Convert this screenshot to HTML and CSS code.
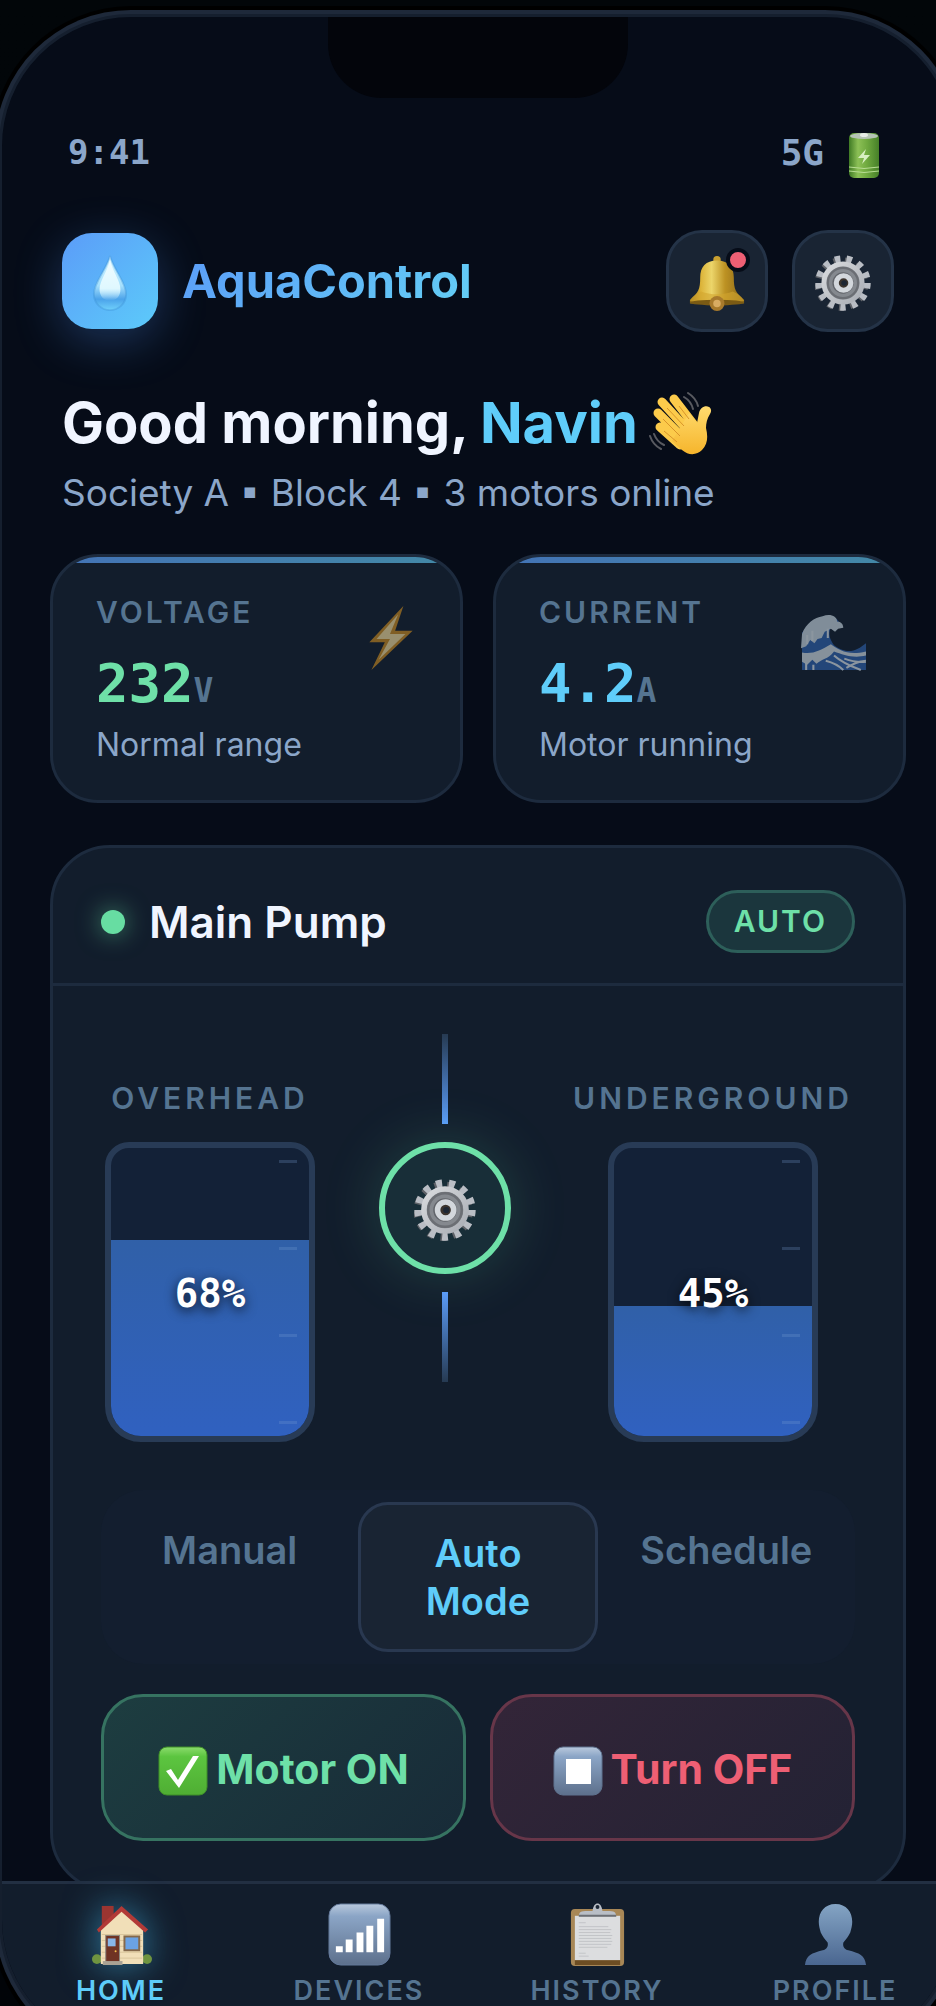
FILE: index.html
```html
<!DOCTYPE html>
<html lang="en">
<head>
    <meta charset="UTF-8">
    <meta name="viewport" content="width=device-width, initial-scale=1.0">
    <title>AquaControl</title>

    <link rel="stylesheet" href="styles.css">
</head>
<body>
    <!-- shared gradients and the gear symbol -->
    <svg class="defs" width="0" height="0" aria-hidden="true">
        <defs>
            <linearGradient id="steel" x1="0" y1="0" x2="0" y2="1">
                <stop offset="0" stop-color="#b9c9dd"/>
                <stop offset="0.2" stop-color="#8ba5c6"/>
                <stop offset="1" stop-color="#5d708c"/>
            </linearGradient>
            <linearGradient id="gold" x1="0" y1="0" x2="1" y2="0">
                <stop offset="0" stop-color="#8e6a14"/>
                <stop offset="0.2" stop-color="#dcb338"/>
                <stop offset="0.4" stop-color="#ecd56a"/>
                <stop offset="0.65" stop-color="#bd9223"/>
                <stop offset="1" stop-color="#8a6717"/>
            </linearGradient>
            <linearGradient id="gear-fill" x1="0" y1="0" x2="1" y2="1">
                <stop offset="0" stop-color="#d9dbde"/>
                <stop offset="1" stop-color="#a9adb4"/>
            </linearGradient>
            <symbol id="gear" viewBox="0 0 100 100">
                <circle cx="47" cy="52" r="42" fill="none" stroke="#5f6268" stroke-width="12" stroke-dasharray="9 11.3"/>
                <circle cx="50" cy="50" r="43" fill="none" stroke="#b9bdc4" stroke-width="13" stroke-dasharray="9.5 11.28"/>
                <circle cx="50" cy="50" r="34" fill="#85898f" stroke="url(#gear-fill)" stroke-width="9"/>
                <circle cx="50" cy="50" r="27" fill="none" stroke="#6b6e74" stroke-width="4"/>
                <circle cx="50" cy="50" r="19" fill="#62656b"/>
                <circle cx="51" cy="50" r="13" fill="#3c342e" stroke="#d3d7dc" stroke-width="9"/>
                <circle cx="52" cy="50" r="5" fill="#1e2734"/>
            </symbol>
        </defs>
    </svg>

    <div class="phone">
        <div class="notch"></div>

        <div class="status-bar">
            <span class="time">9:41</span>
            <span class="signal">5G
                <svg class="battery" viewBox="0 0 48 48" aria-hidden="true">
                    <defs>
                        <linearGradient id="cell" x1="0" y1="0" x2="1" y2="0">
                            <stop offset="0" stop-color="#3f7a24"/>
                            <stop offset="0.3" stop-color="#8cc056"/>
                            <stop offset="0.6" stop-color="#6fa93f"/>
                            <stop offset="1" stop-color="#467f28"/>
                        </linearGradient>
                    </defs>
                    <rect x="9" y="2" width="30" height="45" rx="5" fill="url(#cell)"/>
                    <ellipse cx="24" cy="5" rx="14" ry="3" fill="#b5c4b5"/>
                    <ellipse cx="24" cy="4" rx="4" ry="2" fill="#e6ece6"/>
                    <path d="M26 18l-8 9h6l-2 6 8-9h-6z" fill="#d8efc2"/>
                    <path d="M9 36q15 3 30 0M9 40q15 3 30 0" fill="none" stroke="#b8dd93" stroke-width="1"/>
                </svg>
            </span>
        </div>

        <header class="header">
            <div class="logo">
                <div class="logo-icon">
                    <svg viewBox="0 0 40 60" aria-hidden="true">
                        <defs>
                            <linearGradient id="drop" x1="0" y1="0" x2="0" y2="1">
                                <stop offset="0" stop-color="#d9f6ff"/>
                                <stop offset="0.55" stop-color="#a5e0fd"/>
                                <stop offset="0.8" stop-color="#4ba3ea"/>
                                <stop offset="1" stop-color="#6fd0fb"/>
                            </linearGradient>
                            <linearGradient id="drop-shine" x1="0" y1="0" x2="0" y2="1">
                                <stop offset="0" stop-color="#f0fcff"/>
                                <stop offset="0.7" stop-color="#dff8ff"/>
                                <stop offset="1" stop-color="#dff8ff" stop-opacity="0"/>
                            </linearGradient>
                        </defs>
                        <path d="M20 1C17 14 3 29 3 41c0 10 8 17 17 17s17-7 17-17C37 29 23 14 20 1z" fill="url(#drop)" stroke="#3f93d8" stroke-opacity="0.4" stroke-width="2"/>
                        <path d="M20 5c-2 11-11 22-11 31 0 7 4 12 11 12s11-5 11-12C31 27 22 16 20 5z" fill="url(#drop-shine)"/>
                    </svg>
                </div>
                <span class="logo-text">AquaControl</span>
            </div>
            <div class="header-actions">
                <button class="icon-btn" type="button" aria-label="Notifications">
                    <svg viewBox="0 0 60 60" aria-hidden="true">
                        <circle cx="30" cy="5" r="4" fill="#c9a030"/>
                        <path d="M30 6c-12 0-18 7-18 18 0 13-2 16-11 24v4h58v-4c-9-8-11-11-11-24C48 13 42 6 30 6z" fill="url(#gold)"/>
                        <path d="M1 49c3-6 8-8 12-10 10 4 24 4 34 0 4 2 9 4 12 10-14 6-44 6-58 0z" fill="#d2a52e" opacity="0.6"/>
                        <ellipse cx="30" cy="51" rx="29" ry="3" fill="#7a5a14"/>
                        <circle cx="30" cy="52" r="8" fill="#a87a2c"/>
                        <circle cx="30" cy="52" r="4" fill="#d9ac62"/>
                    </svg>
                    <span class="badge"></span>
                </button>
                <button class="icon-btn" type="button" aria-label="Settings">
                    <svg aria-hidden="true"><use href="#gear"/></svg>
                </button>
            </div>
        </header>

        <main class="content">
            <div class="greeting">
                <h1>Good morning, <span class="name">Navin</span>
                    <svg class="wave" viewBox="0 0 64 64" aria-hidden="true">
                        <defs>
                            <linearGradient id="skin" x1="0" y1="0" x2="0" y2="1">
                                <stop offset="0" stop-color="#ffdb6e"/>
                                <stop offset="1" stop-color="#f6b52c"/>
                            </linearGradient>
                        </defs>
                        <g stroke="#fccb4b" stroke-width="9" stroke-linecap="round">
                            <path d="M13 11l22 24M25 8l20 26M9 22l24 24M11 36l20 18"/>
                        </g>
                        <path d="M60 16c-4-2-9 1-10 6l-2 10-8-10-17 28 10 9c7 6 15 5 20 0 6-6 6-14 4-22 0-5 1-9 4-14 2-3 1-6-1-7z" fill="url(#skin)"/>
                        <path d="M18 17l17 18M30 15l10 13M14 28l17 17M15 40l13 11" stroke="#d9952a" stroke-width="1" fill="none"/>
                        <path d="M35 6q7 4 9 12M39 2q8 5 10 13M5 43q3 8 10 11M1 45q3 9 11 13" fill="none" stroke="#585a60" stroke-width="2" stroke-linecap="round"/>
                    </svg>
                </h1>
                <p>Society A ▪ Block 4 ▪ 3 motors online</p>
            </div>

            <div class="stats">
                <div class="stat-card">
                    <div class="stat-label">VOLTAGE</div>
                    <div class="stat-value green">232<span class="unit">V</span></div>
                    <div class="stat-sub">Normal range</div>
                    <svg class="stat-icon" viewBox="0 0 64 64" aria-hidden="true">
                        <path d="M44 1L11 36h15L13 63l40-38H36z" fill="#c98a20"/>
                        <path d="M39 9L18 33h13L20 53l26-25H31z" fill="#f3dc9a"/>
                    </svg>
                </div>
                <div class="stat-card">
                    <div class="stat-label">CURRENT</div>
                    <div class="stat-value cyan">4.2<span class="unit">A</span></div>
                    <div class="stat-sub">Motor running</div>
                    <svg class="stat-icon" viewBox="0 0 64 64" aria-hidden="true">
                        <path d="M1 27C8 18 14 12 24 11c8-2 12 3 15 9l-10 2c-3 6-1 11 3 17 14 10 22 5 31-2v26H1z" fill="#2f62ad"/>
                        <path d="M1 28c4-10 12-16 20-17 7-3 14 0 14 5 4 0 6 3 6 6l-5 1-3 3-4-3-6 3-3 6-4 1-3 4-4-3-4 6-5 2z" fill="#c9d8e2"/>
                        <path d="M1 46c10 2 18-2 28-8 8 6 17 11 34 7v4c-13 3-22-1-31-4-6 8-12 7-17 12l-4-4-5 5-5-3z" fill="#d3dfe6"/>
                        <path d="M24 54c8 2 13 5 17 9M32 49c9 8 18 11 26 14M42 52c8 3 13 4 21 3M44 61q9-6 19-7M6 29v9M11 25v10M26 23v9M5 56v7M12 58v5" fill="none" stroke="#dce6ec" stroke-width="2"/>
                    </svg>
                </div>
            </div>

            <section class="pump-card">
                <div class="pump-header">
                    <h2><span class="dot"></span>Main Pump</h2>
                    <span class="pill">AUTO</span>
                </div>
                <div class="pump-body">
                    <div class="tanks">
                        <div class="tank-col first">
                            <div class="tank-label">OVERHEAD</div>
                            <div class="tank">
                                <div class="water" style="height: 68%"></div>
                                <div class="ticks"><i></i><i></i><i></i><i></i></div>
                                <span class="level">68%</span>
                            </div>
                        </div>
                        <div class="flow">
                            <span class="pipe"></span>
                            <div class="motor">
                                <svg aria-hidden="true"><use href="#gear"/></svg>
                            </div>
                            <span class="pipe down"></span>
                        </div>
                        <div class="tank-col">
                            <div class="tank-label">UNDERGROUND</div>
                            <div class="tank">
                                <div class="water" style="height: 45%"></div>
                                <div class="ticks"><i></i><i></i><i></i><i></i></div>
                                <span class="level">45%</span>
                            </div>
                        </div>
                    </div>

                    <div class="modes">
                        <button class="mode" type="button">Manual</button>
                        <button class="mode active" type="button">Auto Mode</button>
                        <button class="mode" type="button">Schedule</button>
                    </div>

                    <div class="controls">
                        <button class="control on" type="button">
                            <svg viewBox="0 0 50 50" aria-hidden="true">
                                <defs>
                                    <linearGradient id="tick" x1="0" y1="0" x2="0" y2="1">
                                        <stop offset="0" stop-color="#8bdc6c"/>
                                        <stop offset="0.2" stop-color="#5cc540"/>
                                        <stop offset="1" stop-color="#4fae33"/>
                                    </linearGradient>
                                </defs>
                                <rect x="1" y="1" width="48" height="48" rx="8" fill="url(#tick)" stroke="#3f8f29"/>
                                <path d="M8 25l5-2 7 11L35 10h6L21 42z" fill="#fff"/>
                            </svg>
                            Motor ON
                        </button>
                        <button class="control off" type="button">
                            <svg viewBox="0 0 50 50" aria-hidden="true">
                                <rect x="1" y="1" width="48" height="48" rx="9" fill="url(#steel)" stroke="#5f738f"/>
                                <rect x="13" y="13" width="25" height="25" fill="#fff"/>
                            </svg>
                            Turn OFF
                        </button>
                    </div>
                </div>
            </section>
        </main>

        <nav class="bottom-nav">
            <a class="nav-item active" href="#">
                <svg viewBox="0 0 64 64" aria-hidden="true">
                    <path d="M12 3h12v22H12z" fill="#9b3531"/>
                    <circle cx="7" cy="57" r="5" fill="#6f9440"/>
                    <circle cx="58" cy="57" r="5" fill="#6f9440"/>
                    <path d="M11 26L32 6l22 20v36H11z" fill="#f1dfb8"/>
                    <path d="M12 32h41M12 38h41M12 44h41M12 50h41M12 56h41" stroke="#d9c59b" stroke-width="1"/>
                    <path d="M7 27L32 3l27 24-3 3L32 9 9 30z" fill="#b23a37"/>
                    <rect x="16" y="33" width="14" height="27" fill="#6f3324" stroke="#8d8a80"/>
                    <rect x="18" y="36" width="8" height="8" fill="#88b6e8"/>
                    <circle cx="26" cy="49" r="1" fill="#f5c04d"/>
                    <rect x="35" y="34" width="15" height="14" fill="#6ba2e3" stroke="#85694b" stroke-width="2"/>
                    <rect x="13" y="59" width="20" height="4" fill="#a9a294"/>
                </svg>
                HOME
            </a>
            <a class="nav-item" href="#">
                <svg viewBox="0 0 64 64" aria-hidden="true">
                    <rect x="1" y="1" width="62" height="62" rx="12" fill="url(#steel)" stroke="#64799a"/>
                    <path d="M8 44h7v6H8zM18 37h7v13h-7zM29 30h7v20h-7zM39 23h7v27h-7zM50 16h7v34h-7z" fill="#fff"/>
                </svg>
                DEVICES
            </a>
            <a class="nav-item" href="#">
                <svg viewBox="0 0 64 64" aria-hidden="true">
                    <rect x="5" y="6" width="54" height="58" rx="4" fill="#a88756"/>
                    <rect x="9" y="58" width="46" height="5" fill="#6d4d23"/>
                    <rect x="9" y="13" width="46" height="45" fill="#dcdddf"/>
                    <path d="M13 20h7M13 24h30M13 27h33M13 30h32M13 33h34M13 36h33M13 39h34M13 42h33M13 45h29M13 51h7M13 54h10" stroke="#c2c4c7" stroke-width="1"/>
                    <path d="M13 14c0-5 2-6 9-6h5c1-10 9-10 10 0h5c7 0 9 1 9 6z" fill="#b9bec6"/>
                    <path d="M13 12h38v2H13z" fill="#6c6f75"/>
                    <circle cx="32" cy="4" r="2" fill="#1b2533"/>
                </svg>
                HISTORY
            </a>
            <a class="nav-item" href="#">
                <svg viewBox="0 0 64 64" aria-hidden="true">
                    <defs>
                        <linearGradient id="bust" x1="0" y1="0" x2="0" y2="1">
                            <stop offset="0" stop-color="#84a4c4"/>
                            <stop offset="1" stop-color="#4a6690"/>
                        </linearGradient>
                    </defs>
                    <path d="M32 1c-11 0-17 8-17 18 0 4 1 7 2 11 2 4 4 7 7 10 1 4-1 7-5 8C8 51 2 53 1 63h62c-1-10-7-12-18-15-4-1-6-4-5-8 3-3 5-6 7-10 1-4 2-7 2-11C49 9 43 1 32 1z" fill="url(#bust)"/>
                </svg>
                PROFILE
            </a>
        </nav>
    </div>
</body>
</html>
```
FILE: styles.css
```css
* {
    box-sizing: border-box;
}

body {
    font-family: 'Inter', 'Open Sans', sans-serif;
    background: linear-gradient(180deg, #020609 0%, #010408 100%);
    margin: 0;
    height: 100vh;
    overflow: hidden;
    color: #f0f5ff;
}

h1, h2, p {
    margin: 0;
}

button {
    font-family: inherit;
    cursor: pointer;
}

.defs {
    position: absolute;
}

/* Phone frame, a little larger than the window */
.phone {
    position: relative;
    display: flex;
    flex-direction: column;
    margin: 14px -21px 0 -1px;
    height: calc(100vh + 32px);
    background: #060c18;
    border: 3px solid #151f2e;
    border-radius: 132px;
    box-shadow: 0 0 0 4px #1e293a, 0 0 0 8px #000;
    overflow: hidden;
}

.notch {
    position: absolute;
    top: -3px;
    left: 50%;
    width: 300px;
    height: 84px;
    margin-left: -150px;
    background: #03050b;
    border-radius: 0 0 54px 54px;
}

.status-bar {
    display: flex;
    justify-content: space-between;
    align-items: center;
    flex: none;
    height: 48px;
    margin-top: 111px;
    padding: 0 66px;
    font-family: 'DejaVu Sans Mono', monospace;
    font-weight: bold;
    color: #8ba6c9;
}

.time {
    font-size: 34px;
}

.signal {
    display: flex;
    align-items: center;
    gap: 16px;
    font-size: 36px;
}

.battery {
    width: 48px;
    height: 48px;
    margin-top: 5px;
}

/* Header */
.header {
    display: flex;
    justify-content: space-between;
    align-items: center;
    flex: none;
    margin-top: 54px;
    padding: 0 60px;
}

.logo {
    display: flex;
    align-items: center;
    gap: 24px;
}

.logo-icon {
    display: flex;
    align-items: center;
    justify-content: center;
    width: 96px;
    height: 96px;
    border-radius: 30px;
    background: linear-gradient(135deg, #5b9cf8, #5ccbfa);
    box-shadow: 0 12px 48px rgba(80, 150, 250, 0.3);
}

.logo-icon svg {
    width: 38px;
    height: 57px;
    margin-top: 4px;
}

.logo-text {
    font-size: 47px;
    font-weight: 700;
    line-height: 60px;
    background: linear-gradient(135deg, #5b9cf8, #64d0f5);
    -webkit-background-clip: text;
    background-clip: text;
    color: transparent;
}

.header-actions {
    display: flex;
    gap: 24px;
}

.icon-btn {
    position: relative;
    display: flex;
    align-items: center;
    justify-content: center;
    width: 102px;
    height: 102px;
    padding: 0;
    background: #192433;
    border: 3px solid #243347;
    border-radius: 36px;
}

.icon-btn svg {
    width: 56px;
    height: 56px;
    margin-top: 4px;
}

.badge {
    position: absolute;
    top: 15px;
    right: 15px;
    width: 24px;
    height: 24px;
    background: #ee5f74;
    border: 4px solid #060c18;
    border-radius: 50%;
}

/* Content */
.content {
    flex: 1;
    min-height: 0;
    overflow: hidden;
    padding: 57px 48px 0;
}

.greeting {
    padding: 0 12px;
}

.greeting h1 {
    display: flex;
    align-items: center;
    gap: 11px;
    font-size: 56px;
    font-weight: 700;
    line-height: 68px;
}

.name {
    color: #5fcdfa;
}

.wave {
    width: 64px;
    height: 64px;
}

.greeting p {
    margin-top: 14px;
    font-size: 37px;
    line-height: 44px;
    color: #8ba6c9;
}

.stats {
    display: grid;
    grid-template-columns: 1fr 1fr;
    gap: 30px;
    margin-top: 39px;
}

.stat-card {
    position: relative;
    padding: 37px 43px 35px;
    background: #121d2c;
    border: 3px solid #1d2b3e;
    border-radius: 48px;
    overflow: hidden;
}

.stat-card::before {
    content: "";
    position: absolute;
    top: 0;
    left: 0;
    right: 0;
    height: 6px;
    background: linear-gradient(90deg, #4373b6, #4389a6);
}

.stat-label {
    font-size: 30px;
    font-weight: 600;
    line-height: 36px;
    letter-spacing: 3px;
    color: #557491;
}

.stat-value {
    margin-top: 26px;
    font-family: 'DejaVu Sans Mono', monospace;
    font-size: 54px;
    font-weight: bold;
    line-height: 56px;
}

.stat-value.green {
    color: #6ee0a8;
}

.stat-value.cyan {
    color: #5fcdfa;
}

.unit {
    font-size: 33px;
    line-height: 1;
    color: #557491;
}

.stat-sub {
    margin-top: 13px;
    font-size: 32px;
    line-height: 40px;
    color: #8ba6c9;
}

.stat-icon {
    position: absolute;
    top: 48px;
    right: 36px;
    width: 66px;
    height: 66px;
    opacity: 0.6;
}

/* Main pump */
.pump-card {
    margin-top: 42px;
    background: #121d2c;
    border: 3px solid #1d2b3e;
    border-radius: 60px;
}

.pump-header {
    display: flex;
    justify-content: space-between;
    align-items: center;
    padding: 42px 48px 30px;
    border-bottom: 3px solid #1d2b3e;
}

.pump-header h2 {
    display: flex;
    align-items: center;
    gap: 24px;
    font-size: 44px;
    font-weight: 600;
    line-height: 54px;
}

.dot {
    width: 24px;
    height: 24px;
    border-radius: 50%;
    background: #67dda2;
    box-shadow: 0 0 24px rgba(103, 221, 162, 0.6);
}

.pill {
    padding: 0 25px;
    background: #1b363d;
    border: 3px solid #2d5f5a;
    border-radius: 32px;
    font-size: 30px;
    font-weight: 600;
    line-height: 57px;
    letter-spacing: 2px;
    color: #6ee0a8;
}

.pump-body {
    padding: 48px;
}

.tanks {
    display: flex;
    align-items: flex-end;
}

.tank-col {
    display: flex;
    flex-direction: column;
    align-items: center;
    min-width: 284px;
}

.tank-col.first {
    flex: 1;
    min-width: 0;
}

.tank-label {
    margin-bottom: 26px;
    font-size: 30px;
    font-weight: 600;
    line-height: 36px;
    letter-spacing: 4px;
    color: #557491;
}

.tank {
    position: relative;
    width: 210px;
    height: 300px;
    background: #132137;
    border: 6px solid #283b56;
    border-radius: 24px 24px 36px 36px;
    overflow: hidden;
}

.water {
    position: absolute;
    left: 0;
    right: 0;
    bottom: 0;
    background: linear-gradient(180deg, #3060a8, #3061c0);
}

.ticks {
    position: absolute;
    top: 12px;
    right: 12px;
    bottom: 12px;
    display: flex;
    flex-direction: column;
    justify-content: space-between;
}

.ticks i {
    width: 18px;
    height: 3px;
    background: rgba(120, 160, 210, 0.25);
}

.level {
    position: absolute;
    top: 50%;
    left: 0;
    right: 0;
    margin-top: -21px;
    text-align: center;
    font-family: 'DejaVu Sans Mono', monospace;
    font-size: 39px;
    font-weight: bold;
    line-height: 46px;
    color: #fff;
    text-shadow: 0 3px 12px rgba(0, 0, 0, 0.8);
}

.flow {
    display: flex;
    flex-direction: column;
    align-items: center;
    align-self: flex-start;
    gap: 18px;
    width: 252px;
    margin-bottom: 60px;
}

.pipe {
    width: 6px;
    height: 90px;
    background: linear-gradient(180deg, #263a52, #5b9cf8);
}

.pipe.down {
    background: linear-gradient(0deg, #263a52, #5b9cf8);
}

.motor {
    display: flex;
    align-items: center;
    justify-content: center;
    width: 132px;
    height: 132px;
    background: #182e38;
    border: 6px solid #6ee0a8;
    border-radius: 50%;
    box-shadow: 0 0 60px rgba(103, 221, 162, 0.2);
}

.motor svg {
    width: 62px;
    height: 62px;
    margin-top: 4px;
}

.modes {
    display: flex;
    align-items: flex-start;
    gap: 12px;
    margin-top: 48px;
    padding: 12px;
    background: #131e2f;
    border-radius: 42px;
}

.mode {
    flex: 1 1 0;
    padding: 24px 30px;
    background: none;
    border: none;
    border-radius: 30px;
    font-size: 38px;
    font-weight: 600;
    line-height: 48px;
    color: #557491;
}

.mode.active {
    background: #192433;
    border: 3px solid #293850;
    color: #5fcdfa;
}

.controls {
    display: grid;
    grid-template-columns: 1fr 1fr;
    gap: 24px;
    margin-top: 30px;
}

.control {
    display: flex;
    align-items: center;
    justify-content: center;
    gap: 8px;
    height: 147px;
    padding: 2px 20px 0;
    border-radius: 42px;
    font-size: 41px;
    font-weight: 700;
}

.control svg {
    width: 50px;
    height: 50px;
    margin-top: 4px;
}

.control.on {
    background: linear-gradient(135deg, #1d3d40, #182b38);
    border: 3px solid #367361;
    color: #6ee0a8;
}

.control.off {
    background: linear-gradient(135deg, #332538, #232234);
    border: 3px solid #673649;
    color: #ee5f74;
}

/* Bottom navigation */
.bottom-nav {
    display: flex;
    flex: none;
    height: 168px;
    padding-top: 19px;
    background: #121d2c;
    border-top: 3px solid #222f42;
}

.nav-item {
    display: flex;
    flex: 1;
    flex-direction: column;
    align-items: center;
    gap: 8px;
    font-size: 27px;
    font-weight: 600;
    line-height: 34px;
    letter-spacing: 2px;
    text-decoration: none;
    color: #557491;
}

.nav-item svg {
    width: 63px;
    height: 63px;
}

.nav-item.active {
    color: #5fcdfa;
}

.nav-item.active svg {
    filter: drop-shadow(0 0 18px rgba(70, 190, 240, 0.6));
}
```
